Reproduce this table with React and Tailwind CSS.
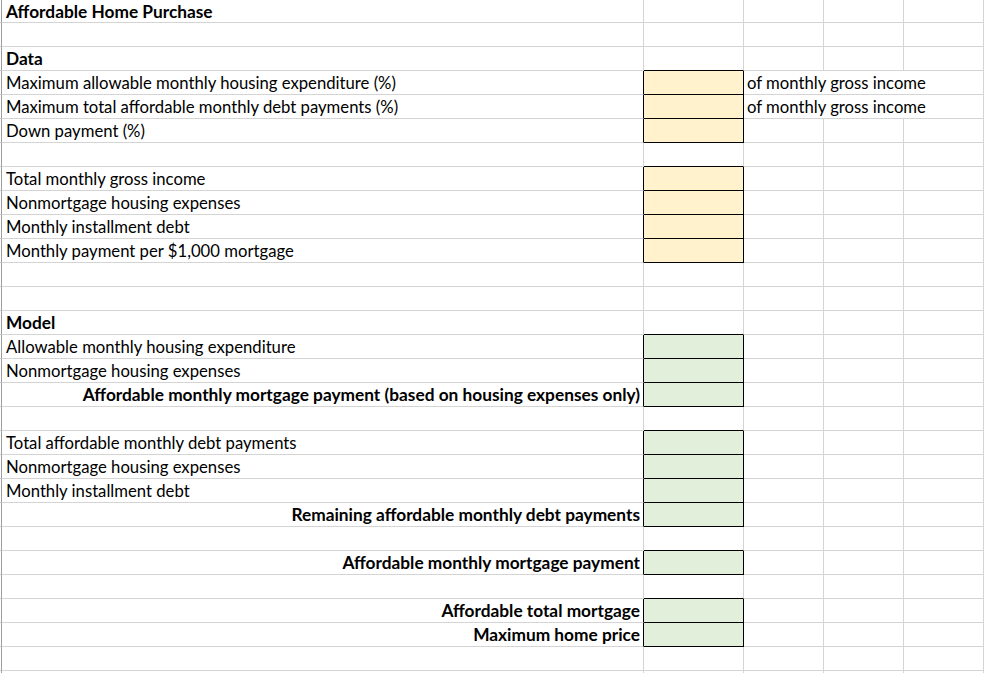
import React from 'react'

const IN = 'in'
const OUT = 'out'
const NOTE = 'of monthly gross income'

const rows = [
  { a: 'Affordable Home Purchase', bold: true, first: true },
  {},
  { a: 'Data', bold: true },
  { a: 'Maximum allowable monthly housing expenditure (%)', cell: IN, c: NOTE },
  { a: 'Maximum total affordable monthly debt payments (%)', cell: IN, c: NOTE },
  { a: 'Down payment (%)', cell: IN },
  {},
  { a: 'Total monthly gross income', cell: IN },
  { a: 'Nonmortgage housing expenses', cell: IN },
  { a: 'Monthly installment debt', cell: IN },
  { a: 'Monthly payment per $1,000 mortgage', cell: IN },
  {},
  {},
  { a: 'Model', bold: true },
  { a: 'Allowable monthly housing expenditure', cell: OUT },
  { a: 'Nonmortgage housing expenses', cell: OUT },
  { a: 'Affordable monthly mortgage payment (based on housing expenses only)', bold: true, right: true, cell: OUT },
  {},
  { a: 'Total affordable monthly debt payments', cell: OUT },
  { a: 'Nonmortgage housing expenses', cell: OUT },
  { a: 'Monthly installment debt', cell: OUT },
  { a: 'Remaining affordable monthly debt payments', bold: true, right: true, cell: OUT },
  {},
  { a: 'Affordable monthly mortgage payment', bold: true, right: true, cell: OUT },
  {},
  { a: 'Affordable total mortgage', bold: true, right: true, cell: OUT },
  { a: 'Maximum home price', bold: true, right: true, cell: OUT },
  {},
  {},
]

const Row = ({ row, next }) => {
  const boxed = !!row.cell
  const nextBoxed = next && !!next.cell
  const height = row.first ? 'h-[23px]' : 'h-[24px]'
  const fill = row.cell === IN ? 'bg-[#fff2cc]' : row.cell === OUT ? 'bg-[#e2efda]' : ''

  return (
    <div className={`flex ${height}`}>
      {/* row header tick */}
      <div className="w-px shrink-0 border-b border-[#c8c8c8]" />
      {/* column A */}
      <div
        className={`w-[643px] shrink-0 flex items-end border-l border-l-[#9c9c9c] border-b border-b-[#d4d4d4] border-r ${
          row.first ? 'pb-0' : 'pb-[1px]'
        } ${boxed ? 'border-r-black' : 'border-r-[#d4d4d4]'} ${row.right ? 'justify-end pr-[3px]' : 'pl-[4px]'}`}
      >
        <span
          className={`whitespace-nowrap leading-[20px] ${row.bold ? 'font-bold text-[17.3px]' : 'text-[16.7px]'}`}
        >
          {row.a}
        </span>
      </div>
      {/* column B */}
      <div
        className={`w-[100px] shrink-0 border-r border-b ${fill} ${boxed ? 'border-r-black' : 'border-r-[#d4d4d4]'} ${
          boxed || nextBoxed ? 'border-b-black' : 'border-b-[#d4d4d4]'
        }`}
      />
      {/* column C, its text runs over D and E */}
      <div className={`w-[80px] shrink-0 flex items-end pl-[3px] pb-[1px] border-b border-[#d4d4d4] ${row.c ? '' : 'border-r'}`}>
        <span className="whitespace-nowrap leading-[20px] text-[16.7px]">{row.c}</span>
      </div>
      <div className={`w-[80px] shrink-0 border-b border-[#d4d4d4] ${row.c ? '' : 'border-r'}`} />
      <div className="w-[80px] shrink-0 border-r border-b border-[#d4d4d4]" />
      <div className="flex-1 border-b border-[#d4d4d4]" />
    </div>
  )
}

const App = () => {
  return (
    <div
      className="w-[984px] h-[673px] overflow-hidden bg-white text-black"
      style={{ fontFamily: 'Lato, "Open Sans", sans-serif' }}
    >
      {rows.map((row, i) => (
        <Row key={i} row={row} next={rows[i + 1]} />
      ))}
    </div>
  )
}

export default App
